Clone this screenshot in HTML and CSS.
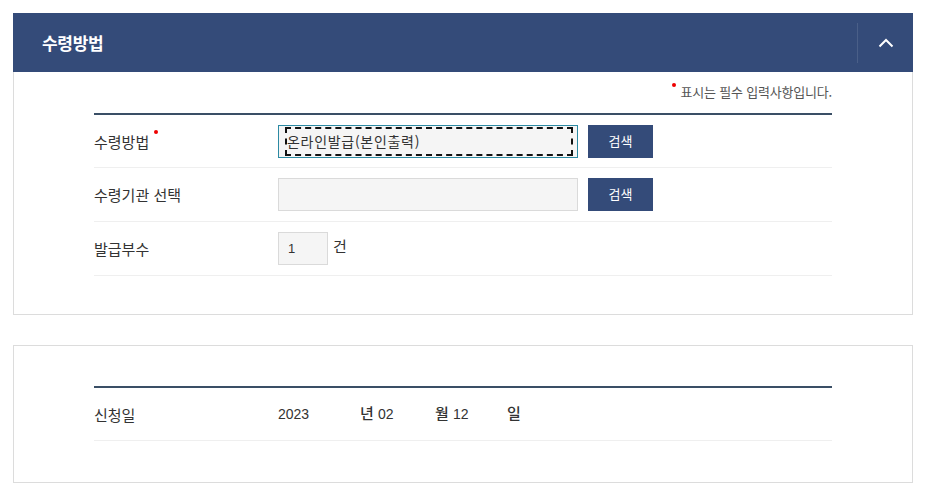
FILE: index.html
```html
<!DOCTYPE html>
<html lang="ko">
<head>
<meta charset="utf-8">
<link rel="stylesheet" href="styles.css">
</head>
<body>
<div class="page">
  <section class="panel">
    <header class="panel-head">
      <h2 class="panel-title">수령방법</h2>
      <div class="toggle">
        <svg width="16" height="10" viewBox="0 0 16 10"><path d="M1.5 8.5 L8 2 L14.5 8.5" fill="none" stroke="#fff" stroke-width="2"/></svg>
      </div>
    </header>
    <div class="panel-body">
      <p class="note"><span class="req-dot"></span>표시는 필수 입력사항입니다.</p>
      <div class="table">
        <div class="row">
          <div class="label">수령방법<span class="req-dot small"></span></div>
          <div class="field">
            <div class="input wide focused"><span class="focus-text">온라인발급(본인출력)</span></div>
            <button class="btn">검색</button>
          </div>
        </div>
        <div class="row">
          <div class="label">수령기관 선택</div>
          <div class="field">
            <div class="input wide"></div>
            <button class="btn">검색</button>
          </div>
        </div>
        <div class="row">
          <div class="label">발급부수</div>
          <div class="field">
            <div class="input short">1</div>
            <span class="unit">건</span>
          </div>
        </div>
      </div>
    </div>
  </section>

  <section class="panel plain">
    <div class="panel-body date-body">
      <div class="table">
        <div class="row date-row">
          <div class="label">신청일</div>
          <div class="field date">
            <span class="num y">2023</span><span class="dunit y">년</span><span class="num m">02</span><span class="dunit m">월</span><span class="num d">12</span><span class="dunit">일</span>
          </div>
        </div>
      </div>
    </div>
  </section>
</div>
</body>
</html>
```

FILE: styles.css
```css
* { box-sizing: border-box; }
html, body { margin: 0; padding: 0; background: #fff; }
body {
  font-family: "Liberation Sans", "Noto Sans CJK KR", sans-serif;
  color: #333;
}
.page {
  padding: 13px 21px 0 13px;
  display: flex;
  flex-direction: column;
  gap: 30px;
}
.panel {
  width: 900px;
}
.panel-head {
  height: 59px;
  background: #344b79;
  display: flex;
  align-items: center;
  justify-content: space-between;
  padding-left: 29px;
}
.panel-title {
  margin: 0;
  color: #fff;
  font-size: 17px;
  font-weight: 700;
  font-family: "Noto Sans CJK KR", sans-serif;
  letter-spacing: -0.3px;
}
.toggle {
  width: 56px;
  height: 40px;
  border-left: 1px solid #4a5f88;
  display: flex;
  align-items: center;
  justify-content: center;
}
.toggle svg { display: block; margin-top: 1px; }
.panel-body {
  border: 1px solid #dcdcdc;
  border-top: none;
  padding: 10px 80px 38px 80px;
}
.panel.plain .panel-body {
  border-top: 1px solid #dcdcdc;
}
.date-body { padding-top: 40px; padding-bottom: 41px; }
.note {
  margin: 0 0 11px;
  text-align: right;
  font-size: 13px;
  color: #555;
  font-family: "Noto Sans CJK KR", sans-serif;
  line-height: 20px;
  letter-spacing: -0.2px;
}
.req-dot {
  display: inline-block;
  width: 4px;
  height: 4px;
  border-radius: 50%;
  background: #e00;
  vertical-align: top;
  margin-right: 5px;
  margin-top: 1px;
}
.req-dot.small {
  margin-left: 5px;
  margin-top: -1px;
}
.table {
  border-top: 2px solid #3a4f66;
}
.row {
  display: flex;
  align-items: center;
  height: 54px;
  border-bottom: 1px solid #efefef;
}
.row:first-child { height: 53px; }
.label {
  width: 184px;
  font-size: 15px;
  color: #333;
  font-family: "Noto Sans CJK KR", sans-serif;
  letter-spacing: 0;
}
.field {
  display: flex;
  align-items: center;
  gap: 10px;
}
.input {
  height: 33px;
  background: #f5f5f5;
  border: 1px solid #dadada;
  font-size: 13px;
  display: flex;
  align-items: center;
  padding-left: 9px;
  color: #333;
}
.input.wide { width: 300px; }
.input.short { width: 50px; }
.input.focused {
  border-color: #2c8aa3;
  padding: 1px;
}
.focus-text {
  display: flex;
  align-items: center;
  height: 29px;
  width: 288px;
  margin-left: 5px;
  border: 2px dashed #111;
  padding-left: 0;
  font-size: 14px;
  font-family: "Noto Sans CJK KR", sans-serif;
  color: #333;
  letter-spacing: 0.7px;
}
.btn {
  width: 65px;
  height: 33px;
  background: #344b79;
  border: none;
  color: #fff;
  font-size: 13px;
  font-family: "Noto Sans CJK KR", sans-serif;
  padding: 0 0 2px;
}
.unit {
  font-size: 15px;
  font-family: "Noto Sans CJK KR", sans-serif;
  margin-left: -5px;
  margin-top: -7px;
}
.row.date-row { height: 53px; }
.field.date { gap: 0; font-size: 14px; }
.num { color: #333; }
.num.y { width: 82px; }
.num.m { width: 57px; }
.num.d { width: 54px; }
.dunit {
  font-size: 15px;
  font-family: "Noto Sans CJK KR", sans-serif;
  font-weight: 500;
  width: 14px;
  margin-top: -3px;
}
.dunit.y { width: 18px; }
.dunit.m { width: 18px; }
```
